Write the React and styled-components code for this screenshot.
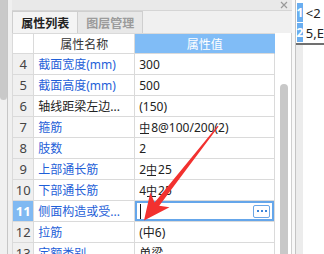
import React from "react";
import styled, { createGlobalStyle } from "styled-components";

const GlobalStyle = createGlobalStyle`
  html, body {
    margin: 0;
    padding: 0;
  }
  body {
    width: 324px;
    height: 254px;
    overflow: hidden;
    font-family: "Noto Sans", "Noto Sans CJK SC", sans-serif;
  }
`;

const Screen = styled.div`
  position: relative;
  display: flex;
  width: 324px;
  height: 254px;
  background: #f0f0f0;
  overflow: hidden;
`;

const LeftGutter = styled.div`
  width: 11px;
  border-right: 1px solid #c6c6c6;
  background: #f0f0f0;
`;

const GutterThumb = styled.div`
  width: 7px;
  height: 100px;
  background: #c9c9c9;
  border-radius: 0 0 4px 4px;
`;

const Panel = styled.div`
  width: 280px;
  padding-left: 4px;
  display: flex;
  flex-direction: column;
`;

const TitleBar = styled.div`
  box-sizing: border-box;
  height: 11px;
  background: #e9e9e9;
  border-bottom: 1px solid #d5d5d5;
  display: flex;
  justify-content: flex-end;
  align-items: center;
  padding-right: 4px;
`;

const TabRow = styled.div`
  height: 22px;
  display: flex;
`;

const Tab = styled.div`
  box-sizing: border-box;
  width: 66px;
  height: 22px;
  margin-left: ${(p) => (p.$first ? "0" : "-1px")};
  border: 1px solid #cfcfcf;
  border-bottom: none;
  background: ${(p) => (p.$active ? "#f4f4f4" : "#e8e8e8")};
  color: ${(p) => (p.$active ? "#222" : "#9b9b9b")};
  font-size: 12px;
  font-weight: 700;
  display: flex;
  align-items: center;
  justify-content: center;
`;

const Body = styled.div`
  flex: 1;
  display: flex;
  min-height: 0;
`;

const Table = styled.div`
  width: 262px;
  border-left: 1px solid #dadada;
  border-top: 1px solid #dadada;
  background: #fff;
`;

const Row = styled.div`
  display: grid;
  grid-template-columns: 21px 101px 140px;
  height: ${(p) => (p.$head ? "20px" : "21px")};
`;

const Cell = styled.div`
  box-sizing: border-box;
  border-right: 1px solid #dadada;
  border-bottom: 1px solid #dadada;
  display: flex;
  align-items: center;
  overflow: hidden;
  white-space: nowrap;
`;

const HeadCell = styled(Cell)`
  justify-content: center;
  font-size: 12px;
  background: ${(p) => (p.$selected ? "#80bcf6" : "#fff")};
  color: ${(p) => (p.$selected ? "#fff" : "#333")};
  border-right-color: ${(p) => (p.$selected ? "#80bcf6" : "#dadada")};
`;

const NumCell = styled(Cell)`
  justify-content: center;
  font-size: 13px;
  background: ${(p) => (p.$active ? "#80b9f2" : "#f0f0f0")};
  color: ${(p) => (p.$active ? "#fff" : "#444")};
  font-weight: ${(p) => (p.$active ? 700 : 400)};
`;

const NameCell = styled(Cell)`
  padding-left: 4px;
  font-size: 12px;
  color: ${(p) => (p.$blue ? "#1f5fd8" : "#222")};
`;

const ValueCell = styled(Cell)`
  padding-left: 4px;
  padding-right: 4px;
  font-size: 12px;
  color: #222;
  box-shadow: ${(p) => (p.$editing ? "inset 0 0 0 2px #65a6ea" : "none")};
`;

const Rebar = styled.span`
  position: relative;
  display: inline-block;
  font-size: 11px;
  line-height: 1;
  margin-right: 1px;

  &::after {
    content: "";
    position: absolute;
    left: 1px;
    right: 1px;
    bottom: -1px;
    height: 1px;
    background: currentColor;
  }
`;

const Caret = styled.span`
  width: 1px;
  height: 15px;
  background: #111;
  margin-left: 1px;
`;

const MoreButton = styled.div`
  box-sizing: border-box;
  margin-left: auto;
  width: 17px;
  height: 13px;
  border: 1px solid #6aa6e6;
  border-radius: 2px;
  background: #fff;
  display: flex;
  align-items: center;
  justify-content: center;
  gap: 2px;
`;

const Dot = styled.span`
  width: 2px;
  height: 2px;
  background: #3d86d9;
`;

const ScrollTrack = styled.div`
  width: 17px;
  box-sizing: border-box;
  background: #fff;
  border-right: 1px solid #cfcfcf;
  padding-top: 51px;
  padding-left: 5px;
  display: flex;
`;

const ScrollThumb = styled.div`
  width: 8px;
  background: #c8c8c8;
  border-radius: 4px 4px 0 0;
`;

const Gap = styled.div`
  width: 4px;
  background: #f8f8f8;
`;

const RightPanel = styled.div`
  flex: 1;
  border-left: 1px solid #c4c4c4;
  background: #fff;
  display: flex;
  flex-direction: column;
`;

const MiniGrid = styled.div`
  padding-top: 3px;
  border-bottom: 2px solid #707070;
`;

const MiniRow = styled.div`
  display: flex;
  height: ${(p) => p.$h}px;
  border-bottom: 1px solid #fff;
`;

const MiniNum = styled.div`
  width: 6px;
  margin-left: 1px;
  background: #6aaef0;
  color: #fff;
  font-size: 12px;
  font-weight: 700;
  display: flex;
  align-items: center;
  justify-content: center;
  overflow: hidden;
`;

const MiniText = styled.div`
  padding-left: 3px;
  font-size: 13px;
  color: #222;
  white-space: nowrap;
  display: flex;
  align-items: center;
`;

const MiniRest = styled.div`
  flex: 1;
  display: flex;
`;

const MiniStrip = styled.div`
  width: 7px;
  background: #ececec;
`;

const Overlay = styled.svg`
  position: absolute;
  left: 0;
  top: 0;
  pointer-events: none;
`;

const rows = [
  { n: 4, name: "截面宽度(mm)", blue: true, value: "300" },
  { n: 5, name: "截面高度(mm)", blue: true, value: "500" },
  { n: 6, name: "轴线距梁左边...", blue: false, value: "(150)" },
  {
    n: 7,
    name: "箍筋",
    blue: true,
    value: (
      <>
        <Rebar>中</Rebar>8@100/200(2)
      </>
    ),
  },
  { n: 8, name: "肢数", blue: true, value: "2" },
  {
    n: 9,
    name: "上部通长筋",
    blue: true,
    value: (
      <>
        2<Rebar>中</Rebar>25
      </>
    ),
  },
  {
    n: 10,
    name: "下部通长筋",
    blue: true,
    value: (
      <>
        4<Rebar>中</Rebar>25
      </>
    ),
  },
  { n: 11, name: "侧面构造或受...", blue: true, editing: true },
  { n: 12, name: "拉筋", blue: true, value: "(中6)" },
  { n: 13, name: "定额类别", blue: true, value: "单梁" },
];

const CloseIcon = () => (
  <svg width="8" height="8" viewBox="0 0 8 8">
    <path d="M1 1 L7 7 M7 1 L1 7" stroke="#9a9a9a" strokeWidth="1.2" />
  </svg>
);

const App = () => {
  return (
    <>
      <GlobalStyle />
      <Screen>
        <LeftGutter>
          <GutterThumb />
        </LeftGutter>

        <Panel>
          <TitleBar>
            <CloseIcon />
          </TitleBar>
          <TabRow>
            <Tab $first $active>
              属性列表
            </Tab>
            <Tab>图层管理</Tab>
          </TabRow>
          <Body>
            <Table>
              <Row $head>
                <HeadCell />
                <HeadCell>属性名称</HeadCell>
                <HeadCell $selected>属性值</HeadCell>
              </Row>
              {rows.map((r) => (
                <Row key={r.n}>
                  <NumCell $active={r.editing}>{r.n}</NumCell>
                  <NameCell $blue={r.blue}>{r.name}</NameCell>
                  <ValueCell $editing={r.editing}>
                    {r.editing ? (
                      <>
                        <Caret />
                        <MoreButton>
                          <Dot />
                          <Dot />
                          <Dot />
                        </MoreButton>
                      </>
                    ) : (
                      r.value
                    )}
                  </ValueCell>
                </Row>
              ))}
            </Table>
            <ScrollTrack>
              <ScrollThumb />
            </ScrollTrack>
          </Body>
        </Panel>

        <Gap />

        <RightPanel>
          <MiniGrid>
            <MiniRow $h={19}>
              <MiniNum>1</MiniNum>
              <MiniText>&lt;2</MiniText>
            </MiniRow>
            <MiniRow $h={19}>
              <MiniNum>2</MiniNum>
              <MiniText>5,E</MiniText>
            </MiniRow>
          </MiniGrid>
          <MiniRest>
            <MiniStrip />
          </MiniRest>
        </RightPanel>

        <Overlay width="324" height="254" viewBox="0 0 324 254">
          <polygon
            points="218.6,126.6 159.2,205.8 169.5,207.3 144,220.5 150.3,192.5 154.6,202.4 217.6,125.8"
            fill="#f2312f"
          />
        </Overlay>
      </Screen>
    </>
  );
};

export default App;
